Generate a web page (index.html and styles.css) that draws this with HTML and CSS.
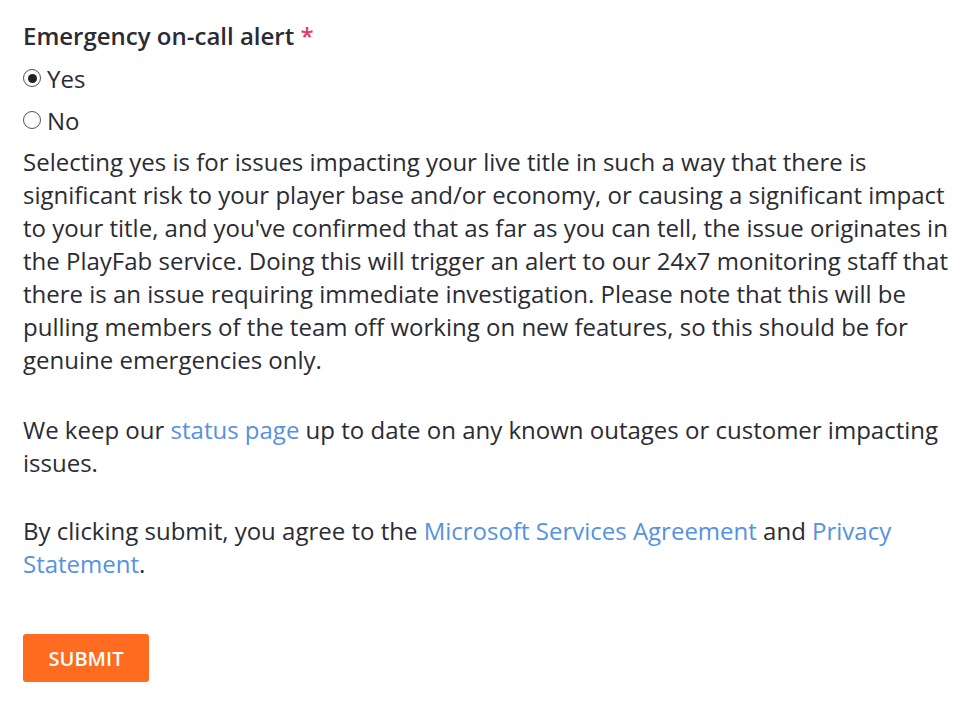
FILE: index.html
```html
<!DOCTYPE html>
<html lang="en">
<head>
<meta charset="utf-8">
<link rel="stylesheet" href="styles.css">
</head>
<body>
<form class="form">
  <div class="field-label">Emergency on-call alert <span class="req">*</span></div>
  <div class="radio-group">
    <label class="radio-row"><input type="radio" name="alert" checked><span>Yes</span></label>
    <label class="radio-row"><input type="radio" name="alert"><span>No</span></label>
  </div>
  <p class="text first">Selecting yes is for issues impacting your live title in such a way that there is significant risk to your player base and/or economy, or causing a significant impact to your title, and you've confirmed that as far as you can tell, the issue originates in the PlayFab service. Doing this will trigger an alert to our 24x7 monitoring staff that there is an issue requiring immediate investigation. Please note that this will be pulling members of the team off working on new features, so this should be for genuine emergencies only.</p>
  <p class="text second">We keep our <a href="#">status page</a> up to date on any known outages or customer impacting issues.</p>
  <p class="text third">By clicking submit, you agree to the <a href="#">Microsoft Services Agreement</a> and <a href="#">Privacy Statement</a>.</p>
  <button type="button" class="submit">SUBMIT</button>
</form>
</body>
</html>
```
FILE: styles.css
```css
html, body {
  margin: 0;
  padding: 0;
  background: #fff;
}
body {
  font-family: "Open Sans", "Noto Sans", sans-serif;
  color: #2b2b33;
}
.form {
  padding: 19px 23px 0 23px;
  width: 930px;
  display: flex;
  flex-direction: column;
  align-items: flex-start;
}
.field-label {
  font-size: 24px;
  font-weight: 600;
  line-height: 34px;
}
.req {
  color: #e8366c;
}
.radio-group {
  margin-top: 4px;
  display: flex;
  flex-direction: column;
}
.radio-row {
  display: flex;
  align-items: center;
  height: 42px;
  font-size: 24px;
  gap: 6px;
}
.radio-row input {
  -webkit-appearance: none;
  appearance: none;
  margin: 0;
  width: 18px;
  height: 18px;
  border: 1.5px solid #555;
  border-radius: 50%;
  display: grid;
  place-items: center;
  background: #fff;
}
.radio-row input:checked::after {
  content: "";
  width: 9px;
  height: 9px;
  border-radius: 50%;
  background: #222;
}
.text {
  font-size: 24px;
  line-height: 33px;
  margin: 0;
}
.text.first {
  margin-top: 4px;
  margin-bottom: 37px;
}
.text.second {
  margin-bottom: 35px;
}
.text.third {
  margin-bottom: 35px;
}
.text a {
  color: #5592e2;
  text-decoration: none;
}
.submit {
  margin-top: 19px;
  width: 126px;
  height: 48px;
  border: none;
  border-radius: 3px;
  background: #ff6c1f;
  color: #fff;
  font-family: "Open Sans", "Noto Sans", sans-serif;
  font-size: 20px;
  font-weight: 600;
  padding: 0;
}
```
